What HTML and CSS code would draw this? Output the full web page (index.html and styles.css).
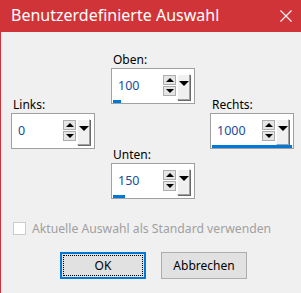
FILE: index.html
```html
<!DOCTYPE html>
<html lang="de">
<head>
    <meta charset="UTF-8">
    <title>Benutzerdefinierte Auswahl</title>
    <link rel="stylesheet" href="styles.css">
</head>
<body>
    <div class="window">
        <div class="titlebar">
            <span class="title">Benutzerdefinierte Auswahl</span>
            <svg class="close" width="12" height="12" viewBox="0 0 12 12">
                <path d="M0.5 0.5 L11.5 11.5 M11.5 0.5 L0.5 11.5" stroke="#fff" stroke-width="1.1"/>
            </svg>
        </div>

        <div class="content">
            <div class="fields">
                <!-- Oben -->
                <div class="field f-top">
                    <label>Oben:</label>
                    <div class="spin-box">
                        <div class="spin-row">
                            <span class="value">100</span>
                            <div class="spin-btns">
                                <span class="spin-btn"><i class="tri up"></i></span>
                                <span class="spin-btn"><i class="tri down"></i></span>
                            </div>
                            <span class="drop-btn"><i class="tri down big"></i></span>
                        </div>
                        <div class="track"><div class="fill" style="width: 10%"></div></div>
                    </div>
                </div>

                <!-- Links -->
                <div class="field f-left">
                    <label>Links:</label>
                    <div class="spin-box">
                        <div class="spin-row">
                            <span class="value">0</span>
                            <div class="spin-btns">
                                <span class="spin-btn"><i class="tri up"></i></span>
                                <span class="spin-btn"><i class="tri down"></i></span>
                            </div>
                            <span class="drop-btn"><i class="tri down big"></i></span>
                        </div>
                        <div class="track"><div class="fill" style="width: 0%"></div></div>
                    </div>
                </div>

                <!-- Rechts -->
                <div class="field f-right">
                    <label>Rechts:</label>
                    <div class="spin-box">
                        <div class="spin-row">
                            <span class="value">1000</span>
                            <div class="spin-btns">
                                <span class="spin-btn"><i class="tri up"></i></span>
                                <span class="spin-btn"><i class="tri down"></i></span>
                            </div>
                            <span class="drop-btn"><i class="tri down big"></i></span>
                        </div>
                        <div class="track"><div class="fill" style="width: 100%"></div></div>
                    </div>
                </div>

                <!-- Unten -->
                <div class="field f-bottom">
                    <label>Unten:</label>
                    <div class="spin-box">
                        <div class="spin-row">
                            <span class="value">150</span>
                            <div class="spin-btns">
                                <span class="spin-btn"><i class="tri up"></i></span>
                                <span class="spin-btn"><i class="tri down"></i></span>
                            </div>
                            <span class="drop-btn"><i class="tri down big"></i></span>
                        </div>
                        <div class="track"><div class="fill" style="width: 15%"></div></div>
                    </div>
                </div>
            </div>

            <div class="check-row">
                <span class="checkbox"></span>
                <span class="check-label">Aktuelle Auswahl als Standard verwenden</span>
            </div>

            <div class="buttons">
                <button class="btn btn-default"><span class="focus">OK</span></button>
                <button class="btn">Abbrechen</button>
            </div>
        </div>
    </div>
</body>
</html>
```

FILE: styles.css
```css
* {
    margin: 0;
    padding: 0;
    box-sizing: border-box;
}

body {
    font-family: 'Noto Sans', 'DejaVu Sans', sans-serif;
    font-size: 12px;
    color: #000;
    background-color: #f0f0f0;
    width: 301px;
    height: 293px;
    overflow: hidden;
}

.window {
    height: 293px;
    border-left: 1px solid #d13438;
    background-color: #f0f0f0;
}

.titlebar {
    height: 32px;
    background-color: #d13438;
    display: flex;
    align-items: center;
    justify-content: space-between;
    padding: 0 9px 0 10px;
    color: #fff;
}

.title {
    font-size: 16px;
    margin-top: -2px;
}

.close {
    margin-top: -1px;
}

.content {
    padding: 20px 0 0 10px;
}

.fields {
    display: grid;
    grid-template-columns: 100px 99px 90px;
    grid-template-rows: 45px 50px 50px;
}

.field label {
    display: block;
    height: 15px;
    line-height: 15px;
    padding-left: 2px;
    margin-bottom: 1px;
}

.f-top {
    grid-column: 2;
    grid-row: 1 / 3;
}

.f-left {
    grid-column: 1;
    grid-row: 2 / 4;
}

.f-right {
    grid-column: 3;
    grid-row: 2 / 4;
}

.f-bottom {
    grid-column: 2;
    grid-row: 3 / 5;
}

.spin-box {
    width: 84px;
    height: 36px;
    border: 1px solid #a0a0a0;
    background-color: #fff;
    display: flex;
    flex-direction: column;
}

.spin-row {
    flex: 1;
    display: flex;
    align-items: center;
    padding: 0 4px 0 6px;
}

.value {
    flex: 1;
    color: #1b4c9c;
    font-size: 12.5px;
    padding-top: 1px;
}

.spin-btns {
    display: flex;
    flex-direction: column;
    gap: 1px;
    margin-top: 2px;
}

.spin-btn {
    width: 13px;
    height: 10px;
    border: 1px solid #adadad;
    background-color: #e5e5e5;
    display: flex;
    align-items: center;
    justify-content: center;
}

.drop-btn {
    width: 13px;
    height: 26px;
    margin-left: 1px;
    margin-top: 5px;
    background-color: #f0f0f0;
    border-left: 1px solid #fff;
    border-top: 1px solid #fff;
    border-right: 1px solid #a0a0a0;
    border-bottom: 1px solid #a0a0a0;
    box-shadow: 1px 1px 0 #696969;
    display: flex;
    justify-content: center;
    padding-top: 6px;
}

.tri {
    width: 0;
    height: 0;
    border-left: 4px solid transparent;
    border-right: 4px solid transparent;
}

.tri.up {
    border-bottom: 4px solid #000;
}

.tri.down {
    border-top: 4px solid #000;
}

.tri.big {
    border-left-width: 5px;
    border-right-width: 5px;
    border-top-width: 5px;
}

.track {
    height: 3px;
    margin: 0 1px 1px 1px;
}

.fill {
    height: 3px;
    background-color: #0078d7;
}

.check-row {
    display: flex;
    align-items: center;
    margin-top: 21px;
    padding-left: 2px;
}

.checkbox {
    width: 13px;
    height: 13px;
    border: 1px solid #cccccc;
    background-color: #fff;
    margin-right: 6px;
}

.check-label {
    color: #a0a0a0;
    font-size: 12.2px;
}

.buttons {
    display: flex;
    gap: 15px;
    margin-top: 15px;
    padding-left: 49px;
}

.btn {
    width: 86px;
    height: 27px;
    font-family: inherit;
    font-size: 12px;
    color: #000;
    background-color: #e1e1e1;
    border: 1px solid #adadad;
}

.btn-default {
    border: 1px solid #0078d7;
    box-shadow: inset 0 0 0 1px #0078d7;
    padding: 2px;
}

.focus {
    display: flex;
    align-items: center;
    justify-content: center;
    height: 100%;
    border: 1px dotted #000;
}
```
